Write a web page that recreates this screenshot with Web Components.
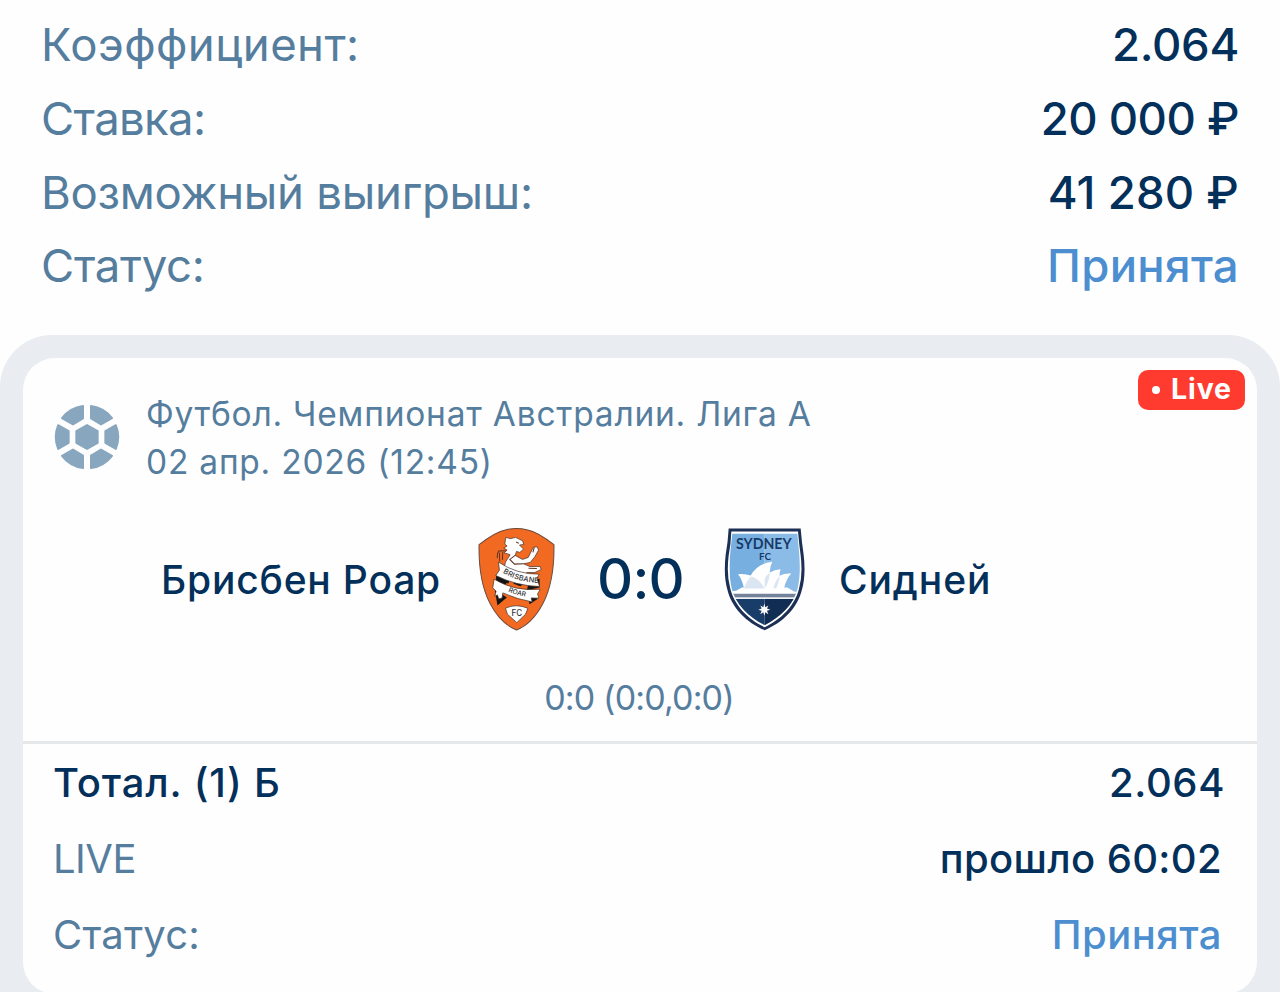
<!DOCTYPE html>
<html lang="ru">
<head>
<meta charset="utf-8">
<title>Ставка</title>
<style>
  body {
    margin: 0;
    background: #fefefe;
    font-family: Inter, "Liberation Sans", sans-serif;
    color: #03305a;
    overflow: hidden;
  }
</style>
</head>
<body>
<bet-slip>
  <info-row slot="summary" style="--label-gap: 0.45px; --value-gap: -0.3px">
    <span slot="label">Коэффициент:</span><span>2.064</span>
  </info-row>
  <info-row slot="summary" style="--label-gap: -0.65px; --value-gap: -0.5px">
    <span slot="label">Ставка:</span><span>20 000 ₽</span>
  </info-row>
  <info-row slot="summary" style="--label-gap: -0.25px; --value-gap: 0.1px">
    <span slot="label">Возможный выигрыш:</span><span>41 280 ₽</span>
  </info-row>
  <info-row slot="summary" style="--label-gap: -0.3px; --value-gap: 0.3px" accepted>
    <span slot="label">Статус:</span><span>Принята</span>
  </info-row>

  <event-card>
    <span slot="league">Футбол. Чемпионат Австралии. Лига А</span>
    <span slot="date">02 апр. 2026 (12:45)</span>
    <live-badge slot="badge">Live</live-badge>
    <span slot="home">Брисбен Роар</span>
    <brisbane-logo slot="home-logo"></brisbane-logo>
    <span slot="score">0:0</span>
    <sydney-logo slot="away-logo"></sydney-logo>
    <span slot="away">Сидней</span>
    <span slot="periods">0:0 (0:0,0:0)</span>
    <info-row slot="bets" style="--label-gap: 0.85px; --value-gap: 0.6px; --value-end: -3px" strong>
      <span slot="label">Тотал. (1) Б</span><span>2.064</span>
    </info-row>
    <info-row slot="bets" style="--label-gap: -0.5px; --value-gap: 0.35px">
      <span slot="label">LIVE</span><span>прошло 60:02</span>
    </info-row>
    <info-row slot="bets" style="--label-gap: 0.2px; --value-gap: 0.5px" accepted>
      <span slot="label">Статус:</span><span>Принята</span>
    </info-row>
  </event-card>
</bet-slip>

<script>
class BaseElement extends HTMLElement {
  constructor() {
    super();
    this.attachShadow({ mode: "open" });
    const template = document.createElement("template");
    template.innerHTML = this.constructor.markup;
    this.shadowRoot.appendChild(template.content.cloneNode(true));
  }
}

class BetSlip extends BaseElement {
  static markup = `
<style>
  :host {
    display: block;
    height: 992px;
    overflow: hidden;
  }

  .summary {
    height: 327px;
    padding: 8px 41px 0 41px;
    box-sizing: border-box;
    font-size: 45.5px;
    --row-height: 73.75px;
  }

  .panel {
    margin-top: 8px;
    padding: 23px 23px 40px;
    background: #e9edf2;
    border-radius: 52px 52px 0 0;
  }
</style>
<div class="summary"><slot name="summary"></slot></div>
<div class="panel"><slot></slot></div>
`;
}
window.customElements.define("bet-slip", BetSlip);

class InfoRow extends BaseElement {
  static markup = `
<style>
  :host {
    display: flex;
    justify-content: space-between;
    height: var(--row-height);
    line-height: var(--row-height);
    white-space: nowrap;
  }

  .label {
    color: #557d9e;
    letter-spacing: var(--label-gap, 0);
  }

  .value {
    font-weight: 500;
    letter-spacing: var(--value-gap, 0);
    margin-right: var(--value-end, 0);
  }

  :host([strong]) .label {
    color: inherit;
    font-weight: 500;
  }

  :host([accepted]) .value {
    color: #4c8ecf;
  }
</style>
<div class="label"><slot name="label"></slot></div>
<div class="value"><slot></slot></div>
`;
}
window.customElements.define("info-row", InfoRow);

class EventCard extends BaseElement {
  static markup = `
<style>
  :host {
    display: block;
    height: 636px;
    background: #fefefe;
    border-radius: 32px;
  }

  .head {
    display: grid;
    grid-template-columns: 66px 1fr auto;
    column-gap: 26px;
    height: 158px;
    padding: 12px 12px 0 31px;
    box-sizing: border-box;
  }

  ball-icon {
    margin-top: 34px;
  }

  .event {
    padding-top: 21px;
    color: #557d9e;
    font-size: 33.5px;
    line-height: 47.7px;
    letter-spacing: 0.77px;
    white-space: nowrap;
  }

  .match {
    display: grid;
    grid-template-columns: 418px 114px 171px 80px 1fr;
    align-items: center;
    height: 126px;
    font-size: 39px;
    font-weight: 500;
    white-space: nowrap;
  }

  .home {
    text-align: right;
    letter-spacing: 0.8px;
  }

  .score {
    text-align: center;
    font-size: 56px;
    letter-spacing: -0.8px;
  }

  .logo {
    display: flex;
    justify-content: flex-end;
  }

  .away {
    padding-left: 33px;
    letter-spacing: 0.9px;
  }

  .periods {
    height: 102px;
    padding: 34px 2px 0 0;
    box-sizing: border-box;
    border-bottom: 3px solid #e5e7e9;
    text-align: center;
    line-height: 44px;
    font-size: 34px;
    letter-spacing: -0.85px;
    color: #557d9e;
  }

  .bets {
    padding: 1px 35px 0 30px;
    font-size: 40px;
    --row-height: 75.8px;
  }
</style>
<div class="head">
  <ball-icon></ball-icon>
  <div class="event">
    <div class="league"><slot name="league"></slot></div>
    <div class="date"><slot name="date"></slot></div>
  </div>
  <slot name="badge"></slot>
</div>
<div class="match">
  <div class="home"><slot name="home"></slot></div>
  <div class="logo"><slot name="home-logo"></slot></div>
  <div class="score"><slot name="score"></slot></div>
  <div class="logo"><slot name="away-logo"></slot></div>
  <div class="away"><slot name="away"></slot></div>
</div>
<div class="periods"><slot name="periods"></slot></div>
<div class="bets"><slot name="bets"></slot></div>
`;
}
window.customElements.define("event-card", EventCard);

class LiveBadge extends BaseElement {
  static markup = `
<style>
  :host {
    display: flex;
    align-items: center;
    width: 107px;
    height: 40px;
    padding: 0 10px 3px 14px;
    box-sizing: border-box;
    border-radius: 10px;
    background: #ff3b30;
    color: #fff;
    font-size: 28.5px;
    font-weight: 700;
    letter-spacing: 0.9px;
    line-height: 37px;
  }

  i {
    width: 8px;
    height: 8px;
    margin: 3px 11px 0 0;
    border-radius: 50%;
    background: #fff;
  }
</style>
<i></i><slot></slot>
`;
}
window.customElements.define("live-badge", LiveBadge);

class BallIcon extends BaseElement {
  static markup = `
<style>
  :host { display: block; width: 66px; height: 66px; }
  svg { display: block; }
</style>
<svg width="66" height="66" viewBox="43 43 198 198">
  <g fill="#88a7bf" stroke="#88a7bf" stroke-width="6" stroke-linejoin="round">
    <path d="M142 106L174 124V160L142 178L110 160V124Z"/>
    <path d="M130 49V86.500L100 104.500L67 85.500A94 94 0 0 1 130 49Z"/>
    <path d="M154 49V86.500L184 104.500L217 85.500A94 94 0 0 0 154 49Z"/>
    <path d="M130 235V197.500L100 179.500L67 198.500A94 94 0 0 0 130 235Z"/>
    <path d="M154 235V197.500L184 179.500L217 198.500A94 94 0 0 1 154 235Z"/>
    <path d="M55.500 106.500L87 124.500V159.500L55.500 177.500A94 94 0 0 1 55.500 106.500Z"/>
    <path d="M228.500 106.500L197 124.500V159.500L228.500 177.500A94 94 0 0 0 228.500 106.500Z"/>
  </g>
</svg>
`;
}
window.customElements.define("ball-icon", BallIcon);

class BrisbaneLogo extends BaseElement {
  static markup = `
<style>
  :host { display: block; width: 77px; height: 103px; }
  svg { display: block; }
  text { font-family: Inter, sans-serif; font-weight: 500; fill: #333; }
</style>
<svg width="77" height="103" viewBox="54 38 230 308">
  <path fill="#f26a21" stroke="#6b4a3c" stroke-width="3" d="M57 88C82 68 112 48 138 43Q169 36 200 43C226 48 256 68 281 88C282 150 274 214 248 264C227 304 198 332 169 343C140 332 111 304 90 264C64 214 56 150 57 88Z"/>
  <!-- shadows behind the ribbon -->
  <path fill="#141414" d="M108 178L140 190L138 208L108 198ZM206 198L238 190V216L200 224ZM104 222L140 246L112 270ZM202 240L232 228V250L208 266Z"/>
  <!-- lion -->
  <path fill="#fff" stroke="#3a2a24" stroke-width="2" d="M134 86L137 66L151 70L166 66L187 76L191 87L178 89L190 101L179 111L169 108L165 120L187 132L204 126L219 96L230 94L235 104L224 124L210 141L190 145L208 153L239 153L243 162L224 171L200 171L190 180H202V202L178 210L150 180L132 158L136 140L150 118L132 112L141 104L131 98L141 92Z"/>
  <path fill="none" stroke="#5b3223" stroke-width="3" d="M138 106L116 107Q110 114 112 128M128 110L127 134M118 112L119 138M176 84L168 80M222 97L218 111M165 120L149 132L163 146L190 145M205 158L230 159"/>
  <path fill="#141414" d="M137 180L150 186L145 204L132 200ZM166 190L190 203L181 212L160 205Z"/>
  <path fill="#fff" stroke="#3a2a24" stroke-width="2" d="M115 140Q170 177 237 176L230 188L238 213Q168 211 107 180L118 164ZM102 191Q165 229 240 221L232 235L236 248L213 247L216 259Q172 252 128 232L126 247L116 250L112 238L104 242L108 227L98 217Z"/>
  <path fill="#fff" stroke="#3a2a24" stroke-width="2" d="M136 278Q168 263 203 278L196 296L170 321L142 296Z"/>
  <path id="top" fill="none" d="M128 172Q176 201 234 202"/>
  <path id="bottom" fill="none" d="M144 228Q172 241 220 246"/>
  <text font-size="22" letter-spacing="0.5"><textPath href="#top">BRISBANE</textPath></text>
  <text font-size="20"><textPath href="#bottom">ROAR</textPath></text>
  <text x="154" y="301" font-size="25" textLength="32" lengthAdjust="spacingAndGlyphs">FC</text>
</svg>
`;
}
window.customElements.define("brisbane-logo", BrisbaneLogo);

class SydneyLogo extends BaseElement {
  static markup = `
<style>
  :host { display: block; width: 82px; height: 103px; }
  svg { display: block; }
  text { font-family: Lato, sans-serif; font-weight: 700; fill: #173a69; }
</style>
<svg width="82" height="103" viewBox="42 38 246 308">
  <defs>
    <clipPath id="shield"><path d="M67 54H262C266 104 276 160 263 218C252 266 211 305 164 329C117 305 76 266 65 218C52 160 62 104 67 54Z"/></clipPath>
  </defs>
  <path fill="#1c2f55" d="M56 39H272Q275 78 281 118Q288 180 276 222C262 280 216 322 164 344C112 322 66 280 52 222Q40 180 47 118Q54 78 56 39Z"/>
  <path fill="#fff" d="M64 48H264Q267 84 272 120Q279 178 267 220C255 270 213 313 164 335C115 313 73 270 61 220Q49 178 56 120Q63 84 64 48Z"/>
  <g clip-path="url(#shield)">
    <path fill="#77b0e0" d="M40 40H164V236H40Z"/>
    <path fill="#8bbbe7" d="M164 40H290V236H164Z"/>
    <path fill="#fff" d="M40 230L78 226L96 216H232L252 228L290 232V237H40Z"/>
    <path fill="#74839a" d="M40 235H290V247H40Z"/>
    <path fill="#183d68" d="M40 250H164V340H40Z"/>
    <path fill="#122d54" d="M164 250H290V340H164Z"/>
    <path fill="#fff" d="M40 246H290V250H40Z"/>
  </g>
  <path fill="#fff" d="M84 176Q106 174 122 180Q143 143 187 139Q178 156 180 171Q193 162 212 161Q208 171 209 181Q225 172 244 174Q230 187 222 218H102Q96 190 84 176Z"/>
  <path fill="#dbe6f2" d="M123 183Q143 188 156 207L164 219H102Q109 197 123 183ZM180 171Q178 198 164 219V190Q168 180 180 171ZM209 181Q208 201 199 218H190Q196 195 209 181Z"/>
  <text x="78" y="99" font-size="46" textLength="167" lengthAdjust="spacingAndGlyphs">SYDNEY</text>
  <text x="147" y="132" font-size="29" textLength="36" lengthAdjust="spacingAndGlyphs">FC</text>
  <path fill="#fff" d="M163 264L166 275L175 270L171 279L181 283L171 286L175 296L166 290L163 301L160 290L151 296L155 286L145 283L155 279L151 270L160 275Z"/>
</svg>
`;
}
window.customElements.define("sydney-logo", SydneyLogo);
</script>
</body>
</html>
